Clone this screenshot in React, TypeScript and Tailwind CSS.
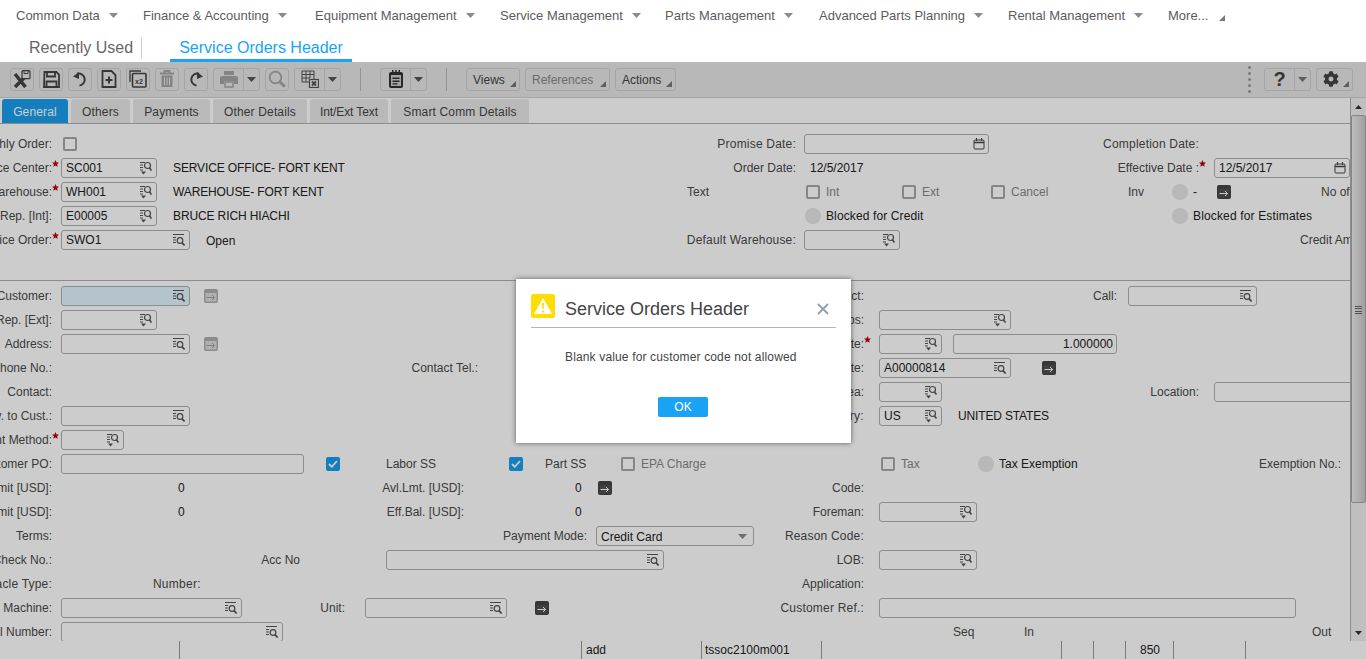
import type { ReactNode } from "react";
import { FaCog } from "react-icons/fa";

const navItems = [
  { name: "Common Data", cls: "w-[127px]" },
  { name: "Finance & Accounting", cls: "w-[172px]" },
  { name: "Equipment Management", cls: "w-[185px]" },
  { name: "Service Management", cls: "w-[165px]" },
  { name: "Parts Management", cls: "w-[154px]" },
  { name: "Advanced Parts Planning", cls: "w-[189px]" },
  { name: "Rental Management", cls: "w-[160px]" },
];

const tabs = [
  { name: "General", cls: "ml-[2px] w-[66px] bg-[#1a9fee] text-white" },
  { name: "Others", cls: "ml-[3px] w-[59px] bg-[#e8e8e8] text-[#444]" },
  { name: "Payments", cls: "ml-[3px] w-[77px] bg-[#e8e8e8] text-[#444]" },
  { name: "Other Details", cls: "ml-[3px] w-[94px] bg-[#e8e8e8] text-[#444]" },
  { name: "Int/Ext Text", cls: "ml-[3px] w-[78px] bg-[#e8e8e8] text-[#444] tracking-[-0.1px]" },
  { name: "Smart Comm Details", cls: "ml-[3px] w-[138px] bg-[#e8e8e8] text-[#444]" },
];

const Caret = ({ className = "fill-[#8a8a8a]" }: { className?: string }) => (
  <svg width="9" height="5" viewBox="0 0 9 5" className={className}>
    <path d="M0 0h9L4.5 5z" />
  </svg>
);

const Corner = ({ className = "fill-[#777]" }: { className?: string }) => (
  <svg width="6" height="6" viewBox="0 0 6 6" className={className}>
    <path d="M6 0v6H0z" />
  </svg>
);

const Star = () => (
  <svg width="7" height="7" viewBox="0 0 10 10" className="absolute left-full top-[1px] fill-[#c00000]">
    <path d="M5 0l1.5 3.4 3.5.3-2.7 2.3.9 3.7L5 7.7 1.8 9.7l.9-3.7L0 3.7l3.5-.3z" />
  </svg>
);

const LookupA = () => (
  <svg width="14" height="14" viewBox="0 0 14 14" className="shrink-0 fill-none stroke-[#555]">
    <path d="M1 1.500h11M1 4.500h3M1 7h3M1 9.500h3" strokeWidth="1" />
    <circle cx="8" cy="7.500" r="2.800" strokeWidth="1.200" />
    <path d="M10 9.700l2.600 2.800" strokeWidth="1.800" />
  </svg>
);

const LookupB = () => (
  <svg width="14" height="14" viewBox="0 0 14 14" className="shrink-0 fill-none stroke-[#555]">
    <path d="M1 1.500h5M1 4h3M1 6.500h3M1 9h3" strokeWidth="1" />
    <circle cx="8.500" cy="4.500" r="3" strokeWidth="1.200" />
    <path d="M10.500 7l2 2.500" strokeWidth="1.600" />
    <path d="M2 10.500h5l-2.500 3z" className="fill-[#555] stroke-none" />
  </svg>
);

const Calendar = () => (
  <svg width="12" height="12" viewBox="0 0 12 12" className="shrink-0 fill-none stroke-[#444]">
    <rect x="1" y="2" width="10" height="9" rx="1" strokeWidth="1" />
    <path d="M1 4.500h10" strokeWidth="1.500" />
    <path d="M3.500 0v3M8.500 0v3" strokeWidth="1" />
  </svg>
);

const Field = ({
  className,
  value,
  icon,
  right,
}: {
  className: string;
  value?: string;
  icon?: ReactNode;
  right?: boolean;
}) => (
  <div
    className={`flex h-5 shrink-0 items-center rounded-[3px] border border-[#b0b0b0] pl-[4px] pr-[3px] text-[#222] ${className}`}
  >
    <span className={`flex-1 ${right ? "text-right" : ""}`}>{value}</span>
    {icon}
  </div>
);

const Label = ({
  className,
  children,
  req,
}: {
  className: string;
  children: ReactNode;
  req?: boolean;
}) => (
  <div className={`flex shrink-0 justify-end ${className}`}>
    <span className="relative shrink-0 text-[#4a4a4a]">
      {children}
      {req && <Star />}
    </span>
  </div>
);

const Cap = ({ className, children }: { className: string; children: ReactNode }) => (
  <div className={`shrink-0 text-[#4a4a4a] ${className}`}>{children}</div>
);

const Val = ({ className, children }: { className: string; children: ReactNode }) => (
  <div className={`shrink-0 text-[#222] ${className}`}>{children}</div>
);

const Gray = ({ className, children }: { className: string; children: ReactNode }) => (
  <div className={`shrink-0 text-[#888] ${className}`}>{children}</div>
);

const Check = ({ className = "" }: { className?: string }) => (
  <div className={`h-[14px] w-[14px] shrink-0 rounded-[2px] border-2 border-[#a8a8a8] ${className}`} />
);

const Checked = ({ className = "" }: { className?: string }) => (
  <div className={`flex h-[14px] w-[14px] shrink-0 items-center justify-center rounded-[2px] bg-[#1a9fee] ${className}`}>
    <svg width="10" height="8" viewBox="0 0 10 8" className="fill-none stroke-white">
      <path d="M1 4l2.800 2.800L9 1" strokeWidth="1.800" />
    </svg>
  </div>
);

const Dot = ({ className = "" }: { className?: string }) => (
  <div className={`h-4 w-4 shrink-0 rounded-full bg-[#e6e6e6] ${className}`} />
);

const Go = ({ className = "", off }: { className?: string; off?: boolean }) => (
  <svg width="14" height="14" viewBox="0 0 14 14" className={`shrink-0 ${className}`}>
    <rect width="14" height="14" rx="2" className={off ? "fill-[#b0b0b0]" : "fill-[#444]"} />
    <path d="M1.500 4h11v8.500h-11z" className={off ? "fill-[#dcdcdc]" : "fill-[#505050]"} />
    <path
      d="M2.500 8.500h8M8 6l2.500 2.500L8 11"
      className={off ? "fill-none stroke-[#a0a0a0]" : "fill-none stroke-white"}
      strokeWidth="1"
    />
  </svg>
);

const Row = ({ children }: { children: ReactNode }) => (
  <div className="flex h-6 shrink-0 items-center whitespace-nowrap">{children}</div>
);

const ToolBtn = ({ children }: { children: ReactNode }) => (
  <div className="flex h-[23px] w-6 shrink-0 items-center justify-center rounded-[3px] border border-[#cfcfcf]">
    {children}
  </div>
);

const SplitBtn = ({ children, className = "" }: { children: ReactNode; className?: string }) => (
  <div className={`flex h-[23px] w-[47px] shrink-0 rounded-[3px] border border-[#cfcfcf] ${className}`}>
    <div className="flex w-[30px] items-center justify-center border-r border-[#cfcfcf]">{children}</div>
    <div className="flex flex-1 items-center justify-center">
      <Caret className="fill-[#555]" />
    </div>
  </div>
);

const MenuBtn = ({ label, className }: { label: string; className: string }) => (
  <div className={`relative flex h-[23px] shrink-0 items-center rounded-[3px] border border-[#cfcfcf] pl-[6px] pt-px ${className}`}>
    {label}
    <span className="absolute bottom-[3px] right-[3px] flex">
      <Corner />
    </span>
  </div>
);

export default function App() {
  return (
    <div className="relative h-[659px] w-[1366px] overflow-hidden bg-white font-['Liberation_Sans',Arial,sans-serif] text-[12px]">
      {/* top menu */}
      <nav className="flex h-[30px] items-center pl-4 pt-px text-[13px] text-[#5c5c5c]">
        {navItems.map((item) => (
          <div key={item.name} className={`flex shrink-0 items-center ${item.cls}`}>
            {item.name}
            <span className="ml-[9px] flex">
              <Caret />
            </span>
          </div>
        ))}
        <div className="flex items-center">
          More...
          <span className="ml-[11px] mt-[4px] flex">
            <Corner />
          </span>
        </div>
      </nav>

      {/* open pages */}
      <div className="flex h-8 items-end text-[16px]">
        <div className="mb-[3px] ml-[29px] flex h-[22px] w-[113px] items-center border-r border-[#ccc] text-[#666]">
          Recently Used
        </div>
        <div className="ml-7 flex h-8 w-[182px] items-center justify-center border-b-[3px] border-[#1aa3f5] pt-[7px] text-[#1aa3f5]">
          Service Orders Header
        </div>
      </div>

      {/* toolbar */}
      <div className="flex h-9 items-center gap-[5px] border-b border-[#cfcfcf] bg-[#e6e6e6] pb-[1px] pl-[10px] pr-[13px] text-[#444]">
        <ToolBtn>
          <svg width="18" height="18" viewBox="0 0 18 18" className="fill-none stroke-[#444]">
            <path d="M2 4l10.500 13M12.500 6.500L2 17" strokeWidth="3.500" />
            <rect x="9" y="0.700" width="8" height="8" rx="1" strokeWidth="1.200" className="fill-[#e6e6e6]" />
            <path d="M11 1v2.500h4V1" strokeWidth="1" />
          </svg>
        </ToolBtn>
        <ToolBtn>
          <svg width="17" height="17" viewBox="0 0 17 17" className="fill-none stroke-[#444]">
            <path d="M1.500 1h12l2.500 2.500V16H1z" strokeWidth="1.800" />
            <path d="M4 1.500v4h8v-4M3.500 15v-4.500h10V15" strokeWidth="1.800" />
          </svg>
        </ToolBtn>
        <ToolBtn>
          <svg width="18" height="18" viewBox="0 0 18 18" className="fill-none stroke-[#444]">
            <path d="M6 3.800A6 6 0 1 1 8.500 15.500" strokeWidth="2" />
            <path d="M2 6.500l6-4.500v7z" className="fill-[#444] stroke-none" />
          </svg>
        </ToolBtn>
        <ToolBtn>
          <svg width="16" height="18" viewBox="0 0 16 18" className="fill-none stroke-[#444]">
            <path d="M1.500 1h9l4 4v12h-13z" strokeWidth="1.800" />
            <path d="M8 6.500v7M4.500 10h7" strokeWidth="2" />
          </svg>
        </ToolBtn>
        <ToolBtn>
          <svg width="18" height="18" viewBox="0 0 18 18" className="fill-none stroke-[#444]">
            <path d="M1 12V1h11" strokeWidth="1.300" />
            <rect x="3.500" y="3.500" width="13.500" height="13.500" rx="1" strokeWidth="1.600" />
            <text x="6" y="14" fontSize="7" fontWeight="700" className="fill-[#444] stroke-none">
              x2
            </text>
          </svg>
        </ToolBtn>
        <ToolBtn>
          <svg width="16" height="18" viewBox="0 0 16 18" className="fill-none stroke-[#a6a6a6]">
            <path d="M1 3.500h14M5.500 3V1h5v2" strokeWidth="1.800" />
            <path d="M2.500 5.500h11V17h-11z" className="fill-[#a6a6a6] stroke-none" />
            <path d="M5.500 7.500v7.500M8 7.500v7.500M10.500 7.500v7.500" strokeWidth="1" className="stroke-[#e6e6e6]" />
          </svg>
        </ToolBtn>
        <ToolBtn>
          <svg width="18" height="18" viewBox="0 0 18 18" className="fill-none stroke-[#444]">
            <path d="M12 3.800A6 6 0 1 0 9.500 15.500" strokeWidth="2" />
            <path d="M16 6.500l-6-4.500v7z" className="fill-[#444] stroke-none" />
          </svg>
        </ToolBtn>
        <SplitBtn>
          <svg width="18" height="17" viewBox="0 0 18 17" className="fill-[#a6a6a6]">
            <path d="M4 0h10v4H4zM2 5h14a2 2 0 0 1 2 2v6h-4v-3H4v3H0V7a2 2 0 0 1 2-2z" />
            <path d="M5 11h8v5H5z" className="fill-none stroke-[#a6a6a6]" strokeWidth="1.500" />
          </svg>
        </SplitBtn>
        <ToolBtn>
          <svg width="18" height="18" viewBox="0 0 18 18" className="fill-none stroke-[#a6a6a6]">
            <circle cx="7.500" cy="7.500" r="5.800" strokeWidth="1.800" />
            <path d="M11.800 11.800l5 5" strokeWidth="2.800" />
          </svg>
        </ToolBtn>
        <SplitBtn>
          <svg width="18" height="18" viewBox="0 0 18 18" className="fill-none stroke-[#555]">
            <path d="M1 1h12v9M1 1v11h7M1 4.500h12M1 8h8M5 1v11M9 1v7" strokeWidth="1" />
            <rect x="8.500" y="9.500" width="9" height="8" className="fill-[#e6e6e6]" strokeWidth="1.200" />
            <path d="M11 11.500l4 4M15 11.500l-4 4" strokeWidth="1.800" />
          </svg>
        </SplitBtn>
        <div className="ml-[14px] h-[23px] w-px shrink-0 bg-[#b8b8b8]" />
        <SplitBtn className="ml-[14px]">
          <svg width="16" height="18" viewBox="0 0 16 18" className="fill-[#333]">
            <rect x="1" y="2" width="14" height="16" rx="2" />
            <path d="M4 0h1.500v3H4zM7.200 0h1.500v3H7.200zM10.500 0H12v3h-1.500z" />
            <path d="M3 5h10v11H3z" className="fill-[#cfcfcf]" />
            <path d="M4.500 7.500h7V9h-7zM4.500 10.500h7V12h-7zM4.500 13.300h5v1.200h-5z" />
          </svg>
        </SplitBtn>
        <div className="ml-[14px] h-[23px] w-px shrink-0 bg-[#b8b8b8]" />
        <MenuBtn label="Views" className="ml-[14px] w-[54px]" />
        <MenuBtn label="References" className="w-[85px] text-[#888]" />
        <MenuBtn label="Actions" className="w-[61px]" />
        <div className="ml-auto mr-[8px] flex h-[27px] flex-col justify-between">
          {[0, 1, 2, 3, 4].map((i) => (
            <span key={i} className="h-[3px] w-[3px] rounded-full bg-[#999]" />
          ))}
        </div>
        <div className="flex h-[23px] w-[47px] shrink-0 rounded-[3px] border border-[#cfcfcf]">
          <div className="flex w-[30px] items-center justify-center border-r border-[#cfcfcf] text-[20px] font-bold text-[#444]">
            ?
          </div>
          <div className="flex flex-1 items-center justify-center">
            <Caret className="fill-[#777]" />
          </div>
        </div>
        <div className="relative flex h-[23px] w-[37px] shrink-0 items-center rounded-[3px] border border-[#cfcfcf] pl-[6px]">
          <FaCog className="text-[16px] text-[#444]" />
          <span className="absolute bottom-[3px] right-[3px] flex">
            <Corner />
          </span>
        </div>
      </div>

      {/* page body */}
      <div className="flex h-[543px]">
        <div className="flex w-[1350px] shrink-0 flex-col overflow-hidden">
          <div className="flex h-[26px] shrink-0 items-end border-b border-[#b0b0b0] pt-px tracking-[0.15px]">
            {tabs.map((t) => (
              <div key={t.name} className={`flex h-6 items-center justify-center rounded-t-[3px] pt-px ${t.cls}`}>
                {t.name}
              </div>
            ))}
          </div>

          <div className="flex-1 overflow-hidden pt-2">
            <Row>
              <Label className="w-[52px]">Monthly Order:</Label>
              <Check className="ml-[11px]" />
              <Label className="w-[719px] tracking-[0.2px]">Promise Date:</Label>
              <Field className="ml-[8px] w-[185px]" icon={<Calendar />} />
              <Label className="w-[210px] tracking-[0.2px]">Completion Date:</Label>
            </Row>
            <Row>
              <Label className="w-[52px]" req>Service Center:</Label>
              <Field className="ml-[9px] w-[96px]" value="SC001" icon={<LookupB />} />
              <Val className="ml-[16px] w-[200px] tracking-[-0.12px]">SERVICE OFFICE- FORT KENT</Val>
              <Label className="w-[423px]">Order Date:</Label>
              <Val className="ml-[14px] w-[60px]">12/5/2017</Val>
              <Label className="w-[329px]" req>Effective Date :</Label>
              <Field className="ml-[15px] w-[136px]" value="12/5/2017" icon={<Calendar />} />
            </Row>
            <Row>
              <Label className="w-[52px]" req>Warehouse:</Label>
              <Field className="ml-[9px] w-[96px]" value="WH001" icon={<LookupB />} />
              <Val className="ml-[16px] w-[200px] tracking-[-0.12px]">WAREHOUSE- FORT KENT</Val>
              <Cap className="ml-[314px] w-[119px]">Text</Cap>
              <Check />
              <Gray className="ml-[6px] w-[76px]">Int</Gray>
              <Check />
              <Gray className="ml-[6px] w-[69px]">Ext</Gray>
              <Check />
              <Gray className="ml-[6px] w-[117px]">Cancel</Gray>
              <Cap className="w-[44px]">Inv</Cap>
              <Dot />
              <Val className="ml-[5px] w-[24px]">-</Val>
              <Go />
              <Cap className="ml-[90px] w-[40px]">No of</Cap>
            </Row>
            <Row>
              <Label className="w-[52px]">Sales Rep. [Int]:</Label>
              <Field className="ml-[9px] w-[96px]" value="E00005" icon={<LookupB />} />
              <Val className="ml-[16px] w-[200px] tracking-[-0.12px]">BRUCE RICH HIACHI</Val>
              <Dot className="ml-[432px]" />
              <Val className="ml-[5px] w-[346px] tracking-[0.12px]">Blocked for Credit</Val>
              <Dot />
              <Val className="ml-[5px] tracking-[0.15px]">Blocked for Estimates</Val>
            </Row>
            <Row>
              <Label className="w-[52px]" req>Service Order:</Label>
              <Field className="ml-[9px] w-[129px]" value="SWO1" icon={<LookupA />} />
              <Val className="ml-[16px] mt-px w-[60px]">Open</Val>
              <Label className="w-[530px] tracking-[0.2px]">Default Warehouse:</Label>
              <Field className="ml-[8px] w-[96px]" icon={<LookupB />} />
              <Cap className="ml-[400px] w-[80px]">Credit Amount</Cap>
            </Row>

            <div className="mb-[3px] mt-7 h-px bg-[#b0b0b0]" />

            <Row>
              <Label className="w-[52px]">Customer:</Label>
              <Field className="ml-[9px] w-[129px] bg-[#e2f4ff]" icon={<LookupA />} />
              <Go off className="ml-[14px]" />
              <Label className="w-[646px]">Contract:</Label>
              <Label className="w-[253px]">Call:</Label>
              <Field className="ml-[11px] w-[129px]" icon={<LookupA />} />
            </Row>
            <Row>
              <Label className="w-[52px]">Sales Rep. [Ext]:</Label>
              <Field className="ml-[9px] w-[96px]" icon={<LookupB />} />
              <Label className="w-[707px]">Groups:</Label>
              <Field className="ml-[15px] w-[132px]" icon={<LookupB />} />
            </Row>
            <Row>
              <Label className="w-[52px]">Address:</Label>
              <Field className="ml-[9px] w-[129px]" icon={<LookupA />} />
              <Go off className="ml-[14px]" />
              <Label className="w-[646px]" req>Rate:</Label>
              <Field className="ml-[15px] w-[63px]" icon={<LookupB />} />
              <Field className="ml-[11px] w-[164px]" value="1.000000" right />
            </Row>
            <Row>
              <Label className="w-[52px]">Phone No.:</Label>
              <Label className="w-[426px]">Contact Tel.:</Label>
              <Label className="w-[386px]">Rate:</Label>
              <Field className="ml-[15px] w-[132px]" value="A00000814" icon={<LookupA />} />
              <Go className="ml-[31px]" />
            </Row>
            <Row>
              <Label className="w-[52px]">Contact:</Label>
              <Label className="w-[812px]">Area:</Label>
              <Field className="ml-[15px] w-[63px]" icon={<LookupB />} />
              <Label className="w-[257px]">Location:</Label>
              <Field className="ml-[15px] w-[140px]" />
            </Row>
            <Row>
              <Label className="w-[52px]">Inv. to Cust.:</Label>
              <Field className="ml-[9px] w-[129px]" icon={<LookupA />} />
              <Label className="w-[674px] tracking-[0.3px]">Country:</Label>
              <Field className="ml-[15px] w-[63px]" value="US" icon={<LookupB />} />
              <Val className="ml-[16px] tracking-[-0.15px]">UNITED STATES</Val>
            </Row>
            <Row>
              <Label className="w-[52px]" req>Payment Method:</Label>
              <Field className="ml-[9px] w-[63px]" icon={<LookupB />} />
            </Row>
            <Row>
              <Label className="w-[52px]">Customer PO:</Label>
              <Field className="ml-[9px] w-[243px]" />
              <Checked className="ml-[22px]" />
              <Cap className="ml-[46px] w-[123px]">Labor SS</Cap>
              <Checked />
              <Cap className="ml-[22px] w-[76px]">Part SS</Cap>
              <Check />
              <Gray className="ml-[6px] w-[240px]">EPA Charge</Gray>
              <Check />
              <Gray className="ml-[6px] w-[77px]">Tax</Gray>
              <Dot />
              <Val className="ml-[5px] w-[100px]">Tax Exemption</Val>
              <Label className="w-[242px]">Exemption No.:</Label>
            </Row>
            <Row>
              <Label className="w-[52px]">Credit Limit [USD]:</Label>
              <Val className="ml-[126px] w-[8px]">0</Val>
              <Label className="w-[278px]">Avl.Lmt. [USD]:</Label>
              <Val className="ml-[111px] w-[8px]">0</Val>
              <Go className="ml-[15px]" />
              <Label className="w-[252px]">Code:</Label>
            </Row>
            <Row>
              <Label className="w-[52px]">Credit Limit [USD]:</Label>
              <Val className="ml-[126px] w-[8px]">0</Val>
              <Label className="w-[278px]">Eff.Bal. [USD]:</Label>
              <Val className="ml-[111px] w-[8px]">0</Val>
              <Label className="w-[281px]">Foreman:</Label>
              <Field className="ml-[15px] w-[98px]" icon={<LookupB />} />
            </Row>
            <Row>
              <Label className="w-[52px]">Terms:</Label>
              <Label className="w-[535px]">Payment Mode:</Label>
              <div className="ml-[9px] flex h-5 w-[158px] shrink-0 items-center rounded-[3px] border border-[#b0b0b0] pl-[4px] pr-[6px] pt-px text-[#222]">
                <span className="flex-1">Credit Card</span>
                <Caret />
              </div>
              <Label className="w-[110px] tracking-[0.2px]">Reason Code:</Label>
            </Row>
            <Row>
              <Label className="w-[52px]">Check No.:</Label>
              <Label className="w-[248px]">Acc No</Label>
              <Field className="ml-[86px] w-[278px]" icon={<LookupA />} />
              <Label className="w-[200px]">LOB:</Label>
              <Field className="ml-[15px] w-[98px]" icon={<LookupB />} />
            </Row>
            <Row>
              <Label className="w-[52px] tracking-[0.2px]">Receptacle Type:</Label>
              <Label className="w-[149px] tracking-[0.3px]">Number:</Label>
              <Label className="w-[663px]">Application:</Label>
            </Row>
            <Row>
              <Label className="w-[52px]">Machine:</Label>
              <Field className="ml-[9px] w-[181px]" icon={<LookupA />} />
              <Label className="w-[103px]">Unit:</Label>
              <Field className="ml-[20px] w-[142px]" icon={<LookupA />} />
              <Go className="ml-[28px]" />
              <Label className="w-[315px] tracking-[0.2px]">Customer Ref.:</Label>
              <Field className="ml-[15px] w-[417px]" />
            </Row>
            <Row>
              <Label className="w-[52px]">Serial Number:</Label>
              <Field className="ml-[9px] w-[222px]" icon={<LookupA />} />
              <Cap className="ml-[670px] w-[71px]">Seq</Cap>
              <Cap className="w-[288px]">In</Cap>
              <Cap className="w-[20px]">Out</Cap>
            </Row>
          </div>
        </div>

        {/* scrollbar */}
        <div className="flex w-4 shrink-0 flex-col border-l border-[#b0b0b0] bg-[#efefef]">
          <div className="flex h-[17px] shrink-0 items-center justify-center">
            <svg width="7" height="4" viewBox="0 0 7 4" className="fill-[#333]">
              <path d="M3.500 0L7 4H0z" />
            </svg>
          </div>
          <div className="flex h-[388px] shrink-0 items-start justify-center rounded-[2px] border border-[#a8a8a8] bg-gradient-to-r from-[#ececec] to-[#c8c8c8] pt-[190px]">
            <div className="flex h-[8px] w-[7px] flex-col justify-between">
              <span className="h-px bg-[#666]" />
              <span className="h-px bg-[#666]" />
              <span className="h-px bg-[#666]" />
              <span className="h-px bg-[#666]" />
            </div>
          </div>
          <div className="mt-auto flex h-[17px] shrink-0 items-center justify-center">
            <svg width="7" height="4" viewBox="0 0 7 4" className="fill-[#333]">
              <path d="M0 0h7L3.500 4z" />
            </svg>
          </div>
        </div>
      </div>

      {/* bottom grid row */}
      <div className="flex h-[18px] text-[#222]">
        <div className="w-[179px]" />
        <div className="w-[402px] border-l border-[#999]" />
        <div className="w-[120px] border-l border-[#999] pl-1">add</div>
        <div className="w-[120px] border-l border-[#999] pl-[3px]">tssoc2100m001</div>
        <div className="w-[240px] border-l border-[#999]" />
        <div className="w-8 border-l border-[#999]" />
        <div className="w-8 border-l border-[#999]" />
        <div className="w-12 border-l border-[#999] pl-[14px]">850</div>
        <div className="w-[72px] border-l border-[#999]" />
        <div className="w-[121px] border-l border-[#999]" />
      </div>

      {/* modal backdrop */}
      <div className="absolute inset-x-0 bottom-0 top-[62px] bg-black/20" />

      {/* warning dialog */}
      <div className="absolute left-[516px] top-[279px] h-[164px] w-[335px] bg-white px-[15px] pt-[15px] shadow-[0_0_5px_rgba(0,0,0,0.55)]">
        <div className="flex h-[34px] items-start border-b border-[#b4b4b4]">
          <svg width="24" height="24" viewBox="0 0 24 24" className="shrink-0">
            <rect width="24" height="24" rx="2" className="fill-[#ffdd00]" />
            <path d="M12 4l9 16H3z" className="fill-white" />
            <path d="M11 9h2l-.3 6h-1.400zM11 16.500h2v2h-2z" className="fill-[#ffdd00]" />
          </svg>
          <div className="ml-[10px] flex-1 pt-[3px] text-[18px] leading-[24px] text-[#444]">Service Orders Header</div>
          <svg width="12" height="12" viewBox="0 0 12 12" className="mr-[7px] mt-[9px] fill-none stroke-[#8da0ac]">
            <path d="M1 1l10 10M11 1L1 11" strokeWidth="1.800" />
          </svg>
        </div>
        <div className="ml-[34px] mt-[20px] tracking-[0.15px] text-[#444]">Blank value for customer code not allowed</div>
        <div className="ml-[127px] mt-[31px] flex h-5 w-[50px] items-center justify-center rounded-[2px] bg-[#1aa3f5] text-white">
          OK
        </div>
      </div>
    </div>
  );
}
